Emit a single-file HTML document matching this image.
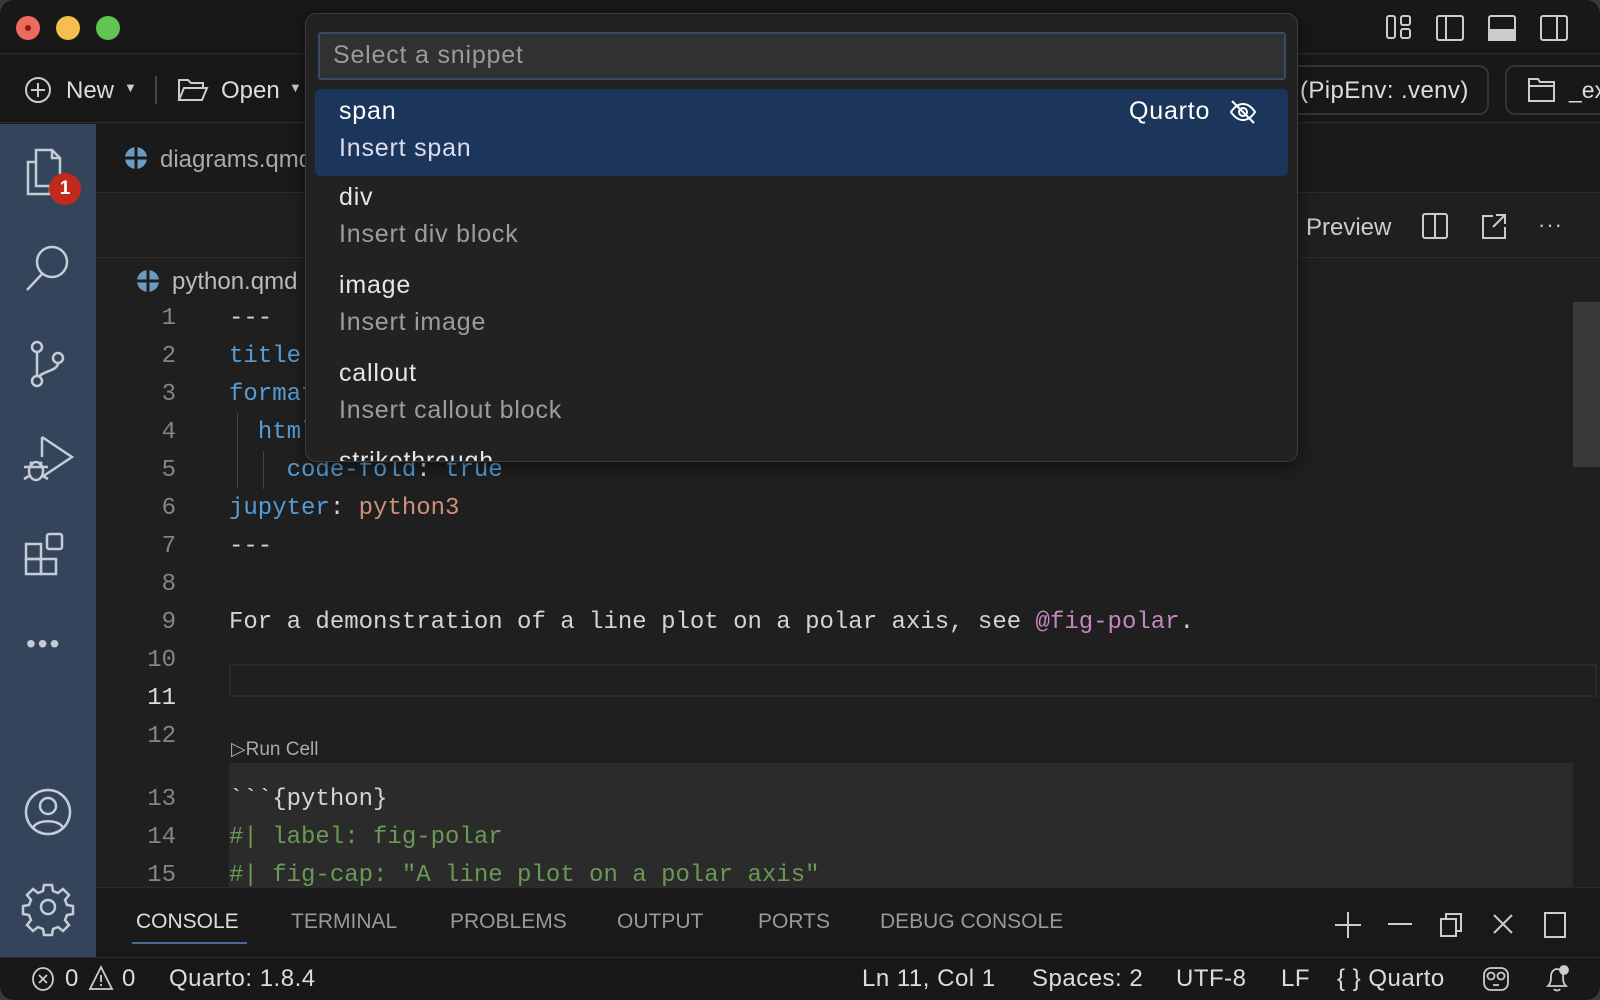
<!DOCTYPE html>
<html><head><meta charset="utf-8"><style>
*{margin:0;padding:0;box-sizing:border-box}
body{width:1600px;height:1000px;background:#3a3a3a;overflow:hidden;font-family:"Liberation Sans",sans-serif;color:#ccc}
.win{position:absolute;left:0;top:0;width:1600px;height:1000px;background:#1f1f1f;border-radius:14px;overflow:hidden}
.a{position:absolute}
.t{position:absolute;white-space:nowrap}
.ln{position:absolute;left:100px;width:76px;text-align:right;color:#858585;font-family:"Liberation Mono",monospace;font-size:24px;line-height:38px}
.cl{position:absolute;left:229px;font-family:"Liberation Mono",monospace;font-size:24px;line-height:38px;white-space:pre;color:#d4d4d4}
.k{color:#569cd6}.s{color:#ce9178}.p{color:#c586c0}.c{color:#6a9955}
svg{position:absolute;overflow:visible}
.ui{font-size:23px}
.pu{font-size:25px;letter-spacing:0.8px}
.st{position:absolute;white-space:nowrap;top:965px;font-size:24px;letter-spacing:0.5px;color:#ddd}
</style></head><body><div class="win">
<!-- title bar -->
<div class="a" style="left:0;top:0;width:1600px;height:54px;background:#181818;border-bottom:1px solid #2b2b2b"></div>
<div class="a" style="left:16px;top:16px;width:24px;height:24px;border-radius:50%;background:#ec6a5e"></div>
<div class="a" style="left:25px;top:25px;width:6px;height:6px;border-radius:50%;background:#8c1a10"></div>
<div class="a" style="left:56px;top:16px;width:24px;height:24px;border-radius:50%;background:#f4bf4f"></div>
<div class="a" style="left:96px;top:16px;width:24px;height:24px;border-radius:50%;background:#61c554"></div>
<svg style="left:1386px;top:15px" width="28" height="24" fill="none" stroke="#ccc" stroke-width="2"><rect x="1" y="1" width="8" height="22" rx="2"/><rect x="15" y="1" width="9" height="9" rx="2"/><rect x="15" y="14" width="9" height="9" rx="2"/></svg>
<svg style="left:1436px;top:15px" width="28" height="24" fill="none" stroke="#ccc" stroke-width="2"><rect x="1" y="1" width="26" height="24" rx="2"/><line x1="10" y1="1" x2="10" y2="25"/></svg>
<svg style="left:1488px;top:15px" width="28" height="24" fill="none" stroke="#ccc" stroke-width="2"><rect x="1" y="1" width="26" height="24" rx="2"/><rect x="1" y="15" width="26" height="10" fill="#ccc"/></svg>
<svg style="left:1540px;top:15px" width="28" height="24" fill="none" stroke="#ccc" stroke-width="2"><rect x="1" y="1" width="26" height="24" rx="2"/><line x1="17" y1="1" x2="17" y2="25"/></svg>
<!-- toolbar -->
<div class="a" style="left:0;top:55px;width:1600px;height:68px;background:#181818;border-bottom:1px solid #2b2b2b"></div>
<svg style="left:25px;top:77px" width="26" height="26" fill="none" stroke="#ccc" stroke-width="2"><circle cx="13" cy="13" r="12"/><path d="M13 6v14M6 13h14"/></svg>
<div class="t ui" style="left:66px;top:77px;color:#ddd;font-size:24px">New</div>
<div class="t" style="left:124px;top:80px;font-size:13px;color:#ccc">▼</div>
<div class="a" style="left:155px;top:76px;width:2px;height:28px;background:#444"></div>
<svg style="left:178px;top:78px" width="30" height="24" fill="none" stroke="#ccc" stroke-width="2"><path d="M1 22V2h9l3 3h12v5M1 22l5-12h23l-5 12z"/></svg>
<div class="t ui" style="left:221px;top:77px;color:#ddd;font-size:24px">Open</div>
<div class="t" style="left:289px;top:80px;font-size:13px;color:#ccc">▼</div>
<div class="a" style="left:1230px;top:65px;width:259px;height:50px;border:2px solid #333;border-radius:10px"></div>
<div class="t ui" style="left:1300px;top:77px;color:#ddd;font-size:24px;letter-spacing:.4px">(PipEnv: .venv)</div>
<div class="a" style="left:1505px;top:65px;width:120px;height:50px;border:2px solid #333;border-radius:10px"></div>
<svg style="left:1528px;top:78px" width="28" height="24" fill="none" stroke="#ccc" stroke-width="2"><path d="M1 23V1h9l2 3h14v19zM1 8h25"/></svg>
<div class="t ui" style="left:1569px;top:77px;color:#ddd">_ex</div>
<!-- activity bar -->
<div class="a" style="left:0;top:124px;width:96px;height:834px;background:#34445a"></div>
<svg style="left:26px;top:148px" width="44" height="48" fill="none" stroke="#c5ccd6" stroke-width="2.5"><path d="M10 8V2h16l8 8v28H10zM26 2v8h8M10 14H2v32h22v-8"/></svg>
<div class="a" style="left:49px;top:173px;width:32px;height:32px;border-radius:50%;background:#c1291b;color:#fff;font-size:19px;font-weight:bold;text-align:center;line-height:32px">1</div>
<svg style="left:24px;top:244px" width="48" height="48" fill="none" stroke="#c5ccd6" stroke-width="2.5"><circle cx="28" cy="18" r="15"/><path d="M18 30L3 46"/></svg>
<svg style="left:26px;top:340px" width="44" height="48" fill="none" stroke="#c5ccd6" stroke-width="2.5"><circle cx="11" cy="7" r="5"/><circle cx="11" cy="41" r="5"/><circle cx="32" cy="18" r="5"/><path d="M11 12v24M32 23c0 8-16 8-19 14"/></svg>
<svg style="left:22px;top:435px" width="52" height="50" fill="none" stroke="#c5ccd6" stroke-width="2.5"><path d="M20 2l30 20-30 20M20 22V2"/><ellipse cx="14" cy="36" rx="7" ry="9"/><path d="M2 32h24M2 44l5-3M26 44l-5-3M8 27l3 3M20 27l-3 3"/></svg>
<svg style="left:24px;top:532px" width="48" height="48" fill="none" stroke="#c5ccd6" stroke-width="2.5"><rect x="2" y="12" width="15" height="15"/><rect x="2" y="27" width="15" height="15"/><rect x="17" y="27" width="15" height="15"/><rect x="23" y="2" width="15" height="15" rx="2"/></svg>
<div class="t" style="left:26px;top:628px;font-size:28px;color:#c5ccd6;letter-spacing:2px">•••</div>
<svg style="left:24px;top:788px" width="48" height="48" fill="none" stroke="#c5ccd6" stroke-width="2.5"><circle cx="24" cy="24" r="22"/><circle cx="24" cy="18" r="8"/><path d="M9 40c3-9 27-9 30 0"/></svg>
<svg style="left:24px;top:883px" width="48" height="48" fill="none" stroke="#c5ccd6" stroke-width="2.5"><circle cx="24" cy="24" r="7"/><path d="M20 2h8l1 6 5 2 5-4 6 6-4 5 2 5 6 1v8l-6 1-2 5 4 5-6 6-5-4-5 2-1 6h-8l-1-6-5-2-5 4-6-6 4-5-2-5-6-1v-8l6-1 2-5-4-5 6-6 5 4 5-2z"/></svg>
<!-- tab bar -->
<div class="a" style="left:96px;top:124px;width:1504px;height:69px;background:#1a1a1a;border-bottom:1px solid #2b2b2b"></div>
<svg style="left:125px;top:147px" width="22" height="22"><circle cx="11" cy="11" r="11" fill="#6b9bc3"/><path d="M11 0v22M0 11h22" stroke="#1a1a1a" stroke-width="3"/></svg>
<div class="t ui" style="left:160px;top:146px;color:#aaa;font-size:24px">diagrams.qmd</div>
<!-- editor toolbar -->
<div class="a" style="left:96px;top:194px;width:1504px;height:64px;background:#1f1f1f;border-bottom:1px solid #2b2b2b"></div>
<div class="t ui" style="left:1306px;top:214px;color:#ccc;font-size:24px">Preview</div>
<svg style="left:1422px;top:213px" width="26" height="26" fill="none" stroke="#ccc" stroke-width="2"><rect x="1" y="1" width="24" height="24" rx="2"/><line x1="13" y1="1" x2="13" y2="25"/></svg>
<svg style="left:1481px;top:213px" width="26" height="26" fill="none" stroke="#ccc" stroke-width="2"><path d="M12 3H2v22h22V14M15 2h9v9M24 2L12 14"/></svg>
<div class="t" style="left:1538px;top:212px;font-size:22px;color:#ccc;letter-spacing:1px">···</div>
<!-- breadcrumb -->
<svg style="left:137px;top:270px" width="22" height="22"><circle cx="11" cy="11" r="11" fill="#6b9bc3"/><path d="M11 0v22M0 11h22" stroke="#1f1f1f" stroke-width="3"/></svg>
<div class="t ui" style="left:172px;top:268px;color:#bbb;font-size:24px">python.qmd</div>
<!-- scrollbar -->
<div class="a" style="left:1573px;top:302px;width:27px;height:165px;background:#3a3a3a"></div>
<!-- current line -->
<div class="a" style="left:229px;top:664px;width:1368px;height:33px;border:2px solid #2a2a2a"></div>
<!-- code block bg -->
<div class="a" style="left:229px;top:763px;width:1344px;height:125px;background:#2b2b2b"></div>
<!-- indent guides -->
<div class="a" style="left:237px;top:413px;width:1px;height:76px;background:#444"></div>
<div class="a" style="left:263px;top:451px;width:1px;height:38px;background:#444"></div>
<!-- line numbers -->
<div class="ln" style="top:300px">1</div><div class="ln" style="top:338px">2</div><div class="ln" style="top:376px">3</div><div class="ln" style="top:414px">4</div><div class="ln" style="top:452px">5</div><div class="ln" style="top:490px">6</div><div class="ln" style="top:528px">7</div><div class="ln" style="top:566px">8</div><div class="ln" style="top:604px">9</div><div class="ln" style="top:642px">10</div><div class="ln" style="top:680px;color:#ddd">11</div><div class="ln" style="top:718px">12</div>
<div class="ln" style="top:781px">13</div><div class="ln" style="top:819px">14</div><div class="ln" style="top:857px">15</div><div class="ln" style="top:895px">16</div>
<div class="cl" style="top:300px">---</div>
<div class="cl" style="top:338px"><span class="k">title</span>: <span class="s">"Quarto Basics"</span></div>
<div class="cl" style="top:376px"><span class="k">format</span>:</div>
<div class="cl" style="top:414px">  <span class="k">html</span>:</div>
<div class="cl" style="top:452px">    <span class="k">code-fold</span>: <span class="k">true</span></div>
<div class="cl" style="top:490px"><span class="k">jupyter</span>: <span class="s">python3</span></div>
<div class="cl" style="top:528px">---</div>
<div class="cl" style="top:604px">For a demonstration of a line plot on a polar axis, see <span class="p">@fig-polar</span>.</div>
<div class="t" style="left:231px;top:738px;font-size:19px;color:#aaa">▷Run Cell</div>
<div class="cl" style="top:781px">&#96;&#96;&#96;{python}</div>
<div class="cl c" style="top:819px">#| label: fig-polar</div>
<div class="cl c" style="top:857px">#| fig-cap: "A line plot on a polar axis"</div>
<!-- panel -->
<div class="a" style="left:96px;top:887px;width:1504px;height:70px;background:#191919;border-top:1px solid #2b2b2b"></div>
<div class="t" style="left:136px;top:910px;font-size:21px;color:#ddd">CONSOLE</div>
<div class="a" style="left:132px;top:942px;width:115px;height:2px;background:#4d6a95"></div>
<div class="t" style="left:291px;top:910px;font-size:21px;color:#999">TERMINAL</div>
<div class="t" style="left:450px;top:910px;font-size:21px;color:#999">PROBLEMS</div>
<div class="t" style="left:617px;top:910px;font-size:21px;color:#999">OUTPUT</div>
<div class="t" style="left:758px;top:910px;font-size:21px;color:#999">PORTS</div>
<div class="t" style="left:880px;top:910px;font-size:21px;color:#999">DEBUG CONSOLE</div>
<svg style="left:1334px;top:911px" width="28" height="28" stroke="#ccc" stroke-width="2"><path d="M14 1v26M1 14h26"/></svg>
<svg style="left:1388px;top:922px" width="24" height="4" stroke="#ccc" stroke-width="2"><path d="M0 2h24"/></svg>
<svg style="left:1440px;top:912px" width="24" height="26" fill="none" stroke="#ccc" stroke-width="2"><rect x="1" y="7" width="15" height="17"/><path d="M6 7V2h15v17h-5"/></svg>
<svg style="left:1493px;top:914px" width="20" height="20" stroke="#ccc" stroke-width="2"><path d="M1 1l18 18M19 1L1 19"/></svg>
<svg style="left:1544px;top:912px" width="22" height="26" fill="none" stroke="#ccc" stroke-width="2"><rect x="1" y="1" width="20" height="24"/></svg>
<!-- status -->
<div class="a" style="left:0;top:957px;width:1600px;height:43px;background:#181818;border-top:1px solid #2b2b2b"></div>
<svg style="left:32px;top:967px" width="22" height="24" fill="none" stroke="#ccc" stroke-width="1.8"><ellipse cx="11" cy="12" rx="10" ry="11"/><path d="M7 8l8 8M15 8l-8 8"/></svg>
<div class="st" style="left:65px">0</div>
<svg style="left:89px;top:966px" width="24" height="24" fill="none" stroke="#ccc" stroke-width="1.8"><path d="M12 1L23 23H1z M12 9v7M12 18v2"/></svg>
<div class="st" style="left:122px">0</div>
<div class="st" style="left:169px">Quarto: 1.8.4</div>
<div class="st" style="left:862px">Ln 11, Col 1</div>
<div class="st" style="left:1032px">Spaces: 2</div>
<div class="st" style="left:1176px">UTF-8</div>
<div class="st" style="left:1281px">LF</div>
<div class="st" style="left:1337px">{ } Quarto</div>
<svg style="left:1483px;top:966px" width="26" height="26" fill="none" stroke="#ccc" stroke-width="1.8"><rect x="1" y="2" width="24" height="22" rx="7"/><circle cx="8" cy="10" r="3.5"/><circle cx="18" cy="10" r="3.5"/><path d="M10 19h6"/></svg>
<svg style="left:1544px;top:965px" width="26" height="28" fill="none" stroke="#ccc" stroke-width="1.8"><path d="M4 21c3-3 3-6 3-10 0-4 3-7 6-7s6 3 6 7c0 4 0 7 3 10zM10 24c1 2 5 2 6 0"/><circle cx="20" cy="5" r="4" fill="#ccc"/></svg>
<!-- command palette -->
<div class="a" style="left:305px;top:13px;width:993px;height:449px;background:#222222;border:1px solid #3d3d3d;border-radius:11px;box-shadow:0 4px 16px rgba(0,0,0,.5);overflow:hidden">
  <div class="a" style="left:12px;top:18px;width:968px;height:48px;background:#313131;border:2px solid #3a4b62;border-radius:3px"></div>
  <div class="t pu" style="left:27px;top:27px;color:#9a9a9a">Select a snippet</div>
  <div class="a" style="left:9px;top:75px;width:973px;height:87px;background:#1c365b;border-radius:6px"></div>
  <div class="t pu" style="left:33px;top:83px;color:#fff">span</div>
  <div class="t pu" style="left:33px;top:120px;color:#dde">Insert span</div>
  <div class="t pu" style="left:823px;top:83px;color:#fff">Quarto</div>
  <svg style="left:923px;top:84px" width="28" height="28" fill="none" stroke="#fff" stroke-width="2"><path d="M2 14c4-6 8-8 12-8s8 2 12 8c-4 6-8 8-12 8s-8-2-12-8z"/><circle cx="14" cy="14" r="4"/><path d="M3 3l22 22"/></svg>
  <div class="t pu" style="left:33px;top:169px;color:#e6e6e6">div</div>
  <div class="t pu" style="left:33px;top:206px;color:#9d9d9d">Insert div block</div>
  <div class="t pu" style="left:33px;top:257px;color:#e6e6e6">image</div>
  <div class="t pu" style="left:33px;top:294px;color:#9d9d9d">Insert image</div>
  <div class="t pu" style="left:33px;top:345px;color:#e6e6e6">callout</div>
  <div class="t pu" style="left:33px;top:382px;color:#9d9d9d">Insert callout block</div>
  <div class="t pu" style="left:33px;top:433px;color:#e6e6e6">strikethrough</div>
</div>
</div></body></html>
